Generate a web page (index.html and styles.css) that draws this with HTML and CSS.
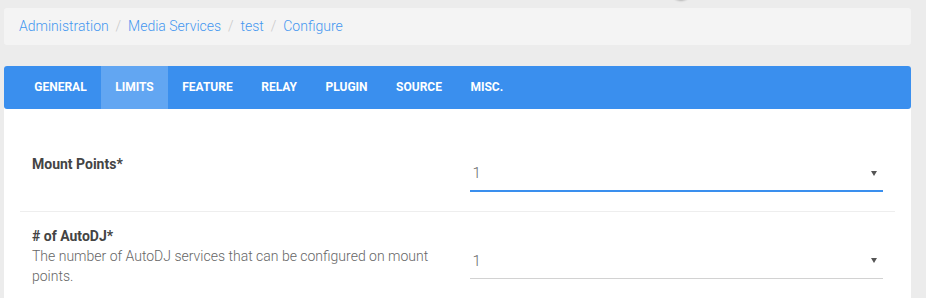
FILE: index.html
```html
<!DOCTYPE html>
<html lang="en">
<head>
    <meta charset="UTF-8">
    <meta name="viewport" content="width=device-width, initial-scale=1.0">
    <title>Configure - test</title>
    <link rel="stylesheet" href="styles.css">
</head>
<body>
    <div class="float-btn"></div>

    <div class="page">
        <ol class="breadcrumb">
            <li><a href="#">Administration</a></li>
            <li><a href="#">Media Services</a></li>
            <li><a href="#">test</a></li>
            <li><a href="#">Configure</a></li>
        </ol>

        <div class="card">
            <ul class="tabs">
                <li class="tab">General</li>
                <li class="tab active">Limits</li>
                <li class="tab">Feature</li>
                <li class="tab">Relay</li>
                <li class="tab">Plugin</li>
                <li class="tab">Source</li>
                <li class="tab">Misc.</li>
            </ul>

            <form class="form">
                <div class="form-row">
                    <div class="form-info">
                        <label class="form-label">Mount Points*</label>
                    </div>
                    <div class="form-field">
                        <div class="select-wrap">
                            <select class="select focused">
                                <option>1</option>
                            </select>
                        </div>
                    </div>
                </div>

                <div class="form-row">
                    <div class="form-info">
                        <label class="form-label"># of AutoDJ*</label>
                        <p class="form-help">The number of AutoDJ services that can be configured on mount points.</p>
                    </div>
                    <div class="form-field">
                        <div class="select-wrap">
                            <select class="select">
                                <option>1</option>
                            </select>
                        </div>
                    </div>
                </div>
            </form>
        </div>
    </div>
</body>
</html>
```

FILE: styles.css
```css
* {
    margin: 0;
    padding: 0;
    box-sizing: border-box;
}

body {
    background-color: #ececec;
    font-family: Roboto, 'Liberation Sans', sans-serif;
    font-size: 14px;
    line-height: 20px;
    color: #555;
    overflow: hidden;
}

.page {
    padding: 8px 15px 0 4px;
}

/* small round button peeking in from the top */
.float-btn {
    position: absolute;
    top: -22px;
    left: 670px;
    width: 22px;
    height: 22px;
    border-radius: 50%;
    background: #fff;
    box-shadow: 0 1px 2px rgba(0, 0, 0, 0.25);
}

.breadcrumb {
    list-style: none;
    background: #f4f4f4;
    border-radius: 3px;
    padding: 8px 15px 9px;
    margin-bottom: 21px;
    font-weight: 300;
}

.breadcrumb li {
    display: inline-block;
}

.breadcrumb li + li:before {
    content: "/\00a0";
    padding: 0 3.5px;
    color: #c8c8c8;
}

.breadcrumb a {
    color: #4497f0;
    text-decoration: none;
}

.card {
    background: #fff;
    border-radius: 3px;
    min-height: 240px;
}

.tabs {
    list-style: none;
    display: flex;
    background: #3a8fee;
    border-radius: 3px;
    padding-left: 16px;
}

.tab {
    padding: 13px 14.25px;
    font-size: 12px;
    line-height: 17px;
    font-weight: 700;
    text-transform: uppercase;
    color: #fff;
    cursor: pointer;
}

.tab.active {
    background: #62a6f2;
}

.form {
    padding: 31px 16px 0;
}

.form-row {
    display: flex;
    align-items: center;
    padding: 14px 0 17px;
    border-bottom: 1px solid #eee;
}

.form-row:last-child {
    border-bottom: none;
}

.form-info,
.form-field {
    flex: 1;
    padding: 0 12px;
}

.form-info {
    min-height: 40px;
}

.form-label {
    display: block;
    font-weight: 700;
    color: #444;
}

.form-help {
    margin-bottom: 10px;
    color: #666;
    font-weight: 300;
    line-height: 20px;
}

.select-wrap {
    position: relative;
}

.select-wrap:after {
    content: "";
    position: absolute;
    right: 6px;
    top: 15px;
    border-left: 3px solid transparent;
    border-right: 3px solid transparent;
    border-top: 5px solid #555;
    pointer-events: none;
}

.select {
    appearance: none;
    -webkit-appearance: none;
    width: 100%;
    height: 36px;
    padding: 0 3px;
    border: none;
    border-bottom: 1px solid #d2d2d2;
    border-radius: 0;
    background: transparent;
    font-family: inherit;
    font-size: 15px;
    font-weight: 300;
    color: #666;
    outline: none;
}

.select.focused {
    border-bottom: 2px solid #3a8fee;
}
```
